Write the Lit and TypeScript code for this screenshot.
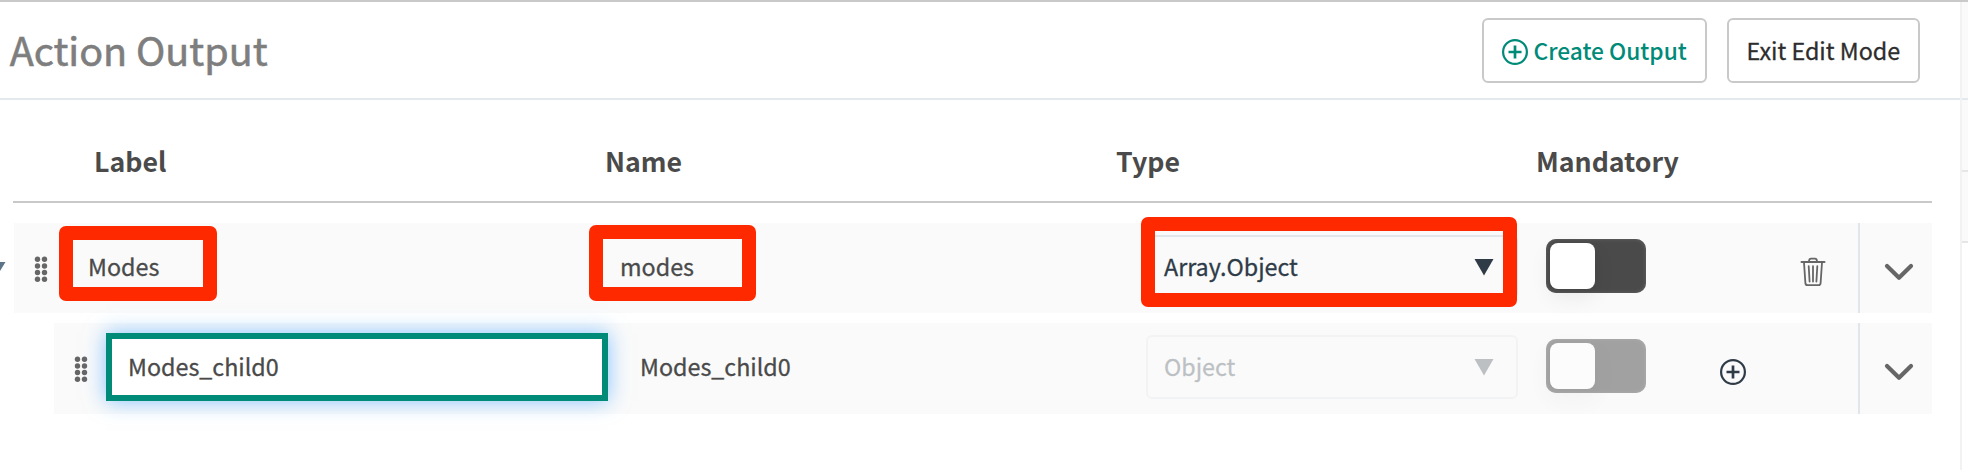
import { LitElement, html, css, svg } from "lit";
import { customElement, property } from "lit/decorators.js";
import { classMap } from "lit/directives/class-map.js";

const plusCircle = html`<svg class="plus" width="26" height="26" viewBox="0 0 26 26" fill="none" stroke="currentColor">
  <circle cx="13" cy="13" r="11.9" stroke-width="2.2"></circle>
  <path d="M13 6.5v13M6.5 13h13" stroke-width="2.7"></path>
</svg>`;

const trash = html`<svg class="trash" width="26" height="30" viewBox="0 0 26 30" fill="none" stroke="#666" stroke-width="1.8" stroke-linecap="round" stroke-linejoin="round">
  <path d="M1.5 5h23" stroke-width="2"></path>
  <path d="M9 4.6 C9 2.2 9.8 1.6 11 1.6h4c1.2 0 2 .6 2 3"></path>
  <path d="M4 5.5l1.4 20.6c.1 1.3.9 2 2.1 2h11c1.2 0 2-.7 2.1-2L22 5.5"></path>
  <path d="M8.700 9.200l.9 15.300M13 9.200v15.300M17.300 9.200l-.9 15.300"></path>
</svg>`;

const chevron = html`<svg width="30" height="20" viewBox="0 0 30 20" fill="none" stroke="#666" stroke-width="4.2" stroke-linecap="round" stroke-linejoin="round">
  <path d="M3 4l12 11.700L27 4"></path>
</svg>`;

const grip = html`<svg width="14" height="28" viewBox="0 0 14 28" fill="#666">
  ${[3.3, 10, 16.5, 23.2].map((y) => svg`<circle cx="3.500" cy=${y} r="2.700"></circle><circle cx="10.500" cy=${y} r="2.700"></circle>`)}
</svg>`;

@customElement("type-select")
export class TypeSelect extends LitElement {
  @property() value = "";
  static styles = css`
    :host { display: flex; box-sizing: border-box; height: 64px; border: 2px solid #e1e6ea; border-radius: 6px;
      padding: 0 22px 0 16px; align-items: center; justify-content: space-between; color: #2f3c48; }
    span { line-height: 32px; position: relative; top: -1px; }
    svg { display: block; }
  `;
  render() {
    return html`<span>${this.value}</span><svg width="20" height="18" viewBox="0 0 20 18"><path d="M.5 1h19L10 17.500z" fill="currentColor"></path></svg>`;
  }
}

@customElement("toggle-switch")
export class ToggleSwitch extends LitElement {
  static styles = css`
    :host { display: block; box-sizing: border-box; width: 100px; height: 54px; padding: 4px; border-radius: 10px;
      background: #4a4a4a; box-shadow: inset 0 0 4px #666; }
    .knob { width: 45px; height: 46px; border-radius: 8px; background: #fff; box-shadow: 0 8px 22px rgba(0, 0, 0, .07); }
  `;
  render() {
    return html`<div class="knob"></div>`;
  }
}

@customElement("output-row")
export class OutputRow extends LitElement {
  @property() label = "";
  @property() name = "";
  @property() type = "";
  @property({ type: Boolean }) child = false;
  static styles = css`
    :host { display: block; }
    .row { display: grid; height: 90px; margin-left: 14px; background: #fafafa; align-items: center; position: relative;
      grid-template-columns: 74px 532px 526px 400px 160px 152px 74px; }
    .row.child { margin-left: 54px; height: 91px; grid-template-columns: 52px 534px 506px 400px 160px 152px 74px; }
    .grip { padding-left: 20px; padding-top: 3px; }
    .child .grip { padding-top: 2px; }
    svg { display: block; }
    .text { line-height: 32px; margin-top: -4px; color: #4a4a4a; }
    .child .text { margin-top: -5px; }
    .field { box-sizing: border-box; width: 502px; height: 68px; border: 6px solid #008a78; background: #fff; padding: 11px 16px;
      line-height: 32px; color: #4a4a4a; box-shadow: 0 0 20px rgba(70, 165, 255, .65); }
    .child .field { margin-top: -3px; }
    .type { width: 372px; margin-top: -2px; }
    .child .type { opacity: .3; margin-top: -3px; }
    .toggle { margin-top: -4px; }
    .child .toggle { opacity: .5; margin-top: -5px; }
    .actions { display: flex; height: 100%; align-items: center; box-sizing: border-box; color: #2f3c48; }
    .plus { margin-left: 13.500px; margin-top: 7px; }
    .trash { margin-left: 94px; margin-top: 7px; }
    .more { display: flex; align-items: center; height: 100%; box-sizing: border-box; border-left: 2px solid #e1e6ea; padding: 7px 0 0 24px; }
    .mark { position: absolute; box-sizing: border-box; border: 14px solid #ff2900; border-radius: 7px; }
    .mark-label { left: 44.5px; top: 2.500px; width: 158.500px; height: 75.500px; }
    .mark-name { left: 574.500px; top: 2px; width: 167.500px; height: 75.500px; }
    .mark-type { left: 1126.500px; top: -5.700px; width: 376.500px; height: 90px; }
    .expander { position: absolute; left: -26px; top: 38px; }
  `;
  render() {
    return html`<div class=${classMap({ row: true, child: this.child })}>
      <div class="grip">${grip}</div>
      ${this.child ? html`<div class="field">${this.label}</div>` : html`<div class="text">${this.label}</div>`}
      <div class="text">${this.name}</div>
      <type-select class="type" .value=${this.type}></type-select>
      <toggle-switch class="toggle"></toggle-switch>
      <div class="actions">${this.child ? plusCircle : trash}</div>
      <div class="more">${chevron}</div>
      ${this.child ? "" : html`<svg class="expander" width="18" height="16" viewBox="0 0 18 16"><path d="M0 1h17.500L9 15z" fill="#5b7487"></path></svg>
        <div class="mark mark-label"></div><div class="mark mark-name"></div><div class="mark mark-type"></div>`}
    </div>`;
  }
}

@customElement("app-root")
export class AppRoot extends LitElement {
  static styles = css`
    :host { display: block; height: 470px; overflow: hidden; box-sizing: border-box; border-top: 2px solid #c9c9c9; background: #fff;
      font: 400 23.300px "Noto Sans CJK SC", "Noto Sans", sans-serif; white-space: nowrap; -webkit-text-stroke: .3px currentColor; }
    .page { display: grid; grid-template-columns: 1960px 8px; height: 468px; }
    header { display: flex; box-sizing: border-box; height: 98px; border-bottom: 2px solid #e4e9ed; align-items: center; padding-right: 40px; }
    h1 { margin: 0 auto 0 9.700px; font-size: 39.500px; font-weight: 400; color: #7e7e7e; line-height: 56px; position: relative; top: -1px; -webkit-text-stroke-width: .6px; }
    .btn { box-sizing: border-box; height: 65px; margin-top: 1px; border: 2px solid #c9c9c9; border-radius: 6px; display: flex; align-items: center; color: #2d2d2d; line-height: 33px; }
    .create { width: 225px; padding-left: 18px; gap: 5.500px; margin-right: 20px; color: #008a78; }
    .create svg { position: relative; top: 1.500px; }
    .create span { font-weight: 500; font-size: 22.750px; -webkit-text-stroke-width: 0; }
    .exit { width: 193px; padding-left: 17.500px; }
    .head { display: grid; grid-template-columns: 511px 511px 420px 1fr; margin-left: 13px; width: 1919px; box-sizing: border-box; height: 103px;
      border-bottom: 2px solid #c9c9c9; padding: 39px 0 0 81px; font-size: 26.700px; font-weight: 700; line-height: 44px; color: #4a4a4a; -webkit-text-stroke-width: 0; }
    .rows { display: flex; flex-direction: column; gap: 10px; padding-top: 20px; width: 1932px; }
    aside { border-left: 2px solid #f2f2f2; display: flex; flex-direction: column; }
    .cell { box-sizing: border-box; background: #fafafa; border-bottom: 2px solid #e6e6e6; height: 71px; }
    .cell.first { height: 98px; border-color: #e4e9ed; }
    .cell.mid { height: 72px; }
  `;
  render() {
    return html`<div class="page">
      <main>
        <header>
          <h1>Action Output</h1>
          <div class="btn create">${plusCircle}<span>Create Output</span></div>
          <div class="btn exit"><span>Exit Edit Mode</span></div>
        </header>
        <div class="head"><span>Label</span><span>Name</span><span>Type</span><span>Mandatory</span></div>
        <div class="rows">
          <output-row label="Modes" name="modes" type="Array.Object"></output-row>
          <output-row child label="Modes_child0" name="Modes_child0" type="Object"></output-row>
        </div>
      </main>
      <aside><div class="cell first"></div><div class="cell mid"></div><div class="cell"></div></aside>
    </div>`;
  }
}
